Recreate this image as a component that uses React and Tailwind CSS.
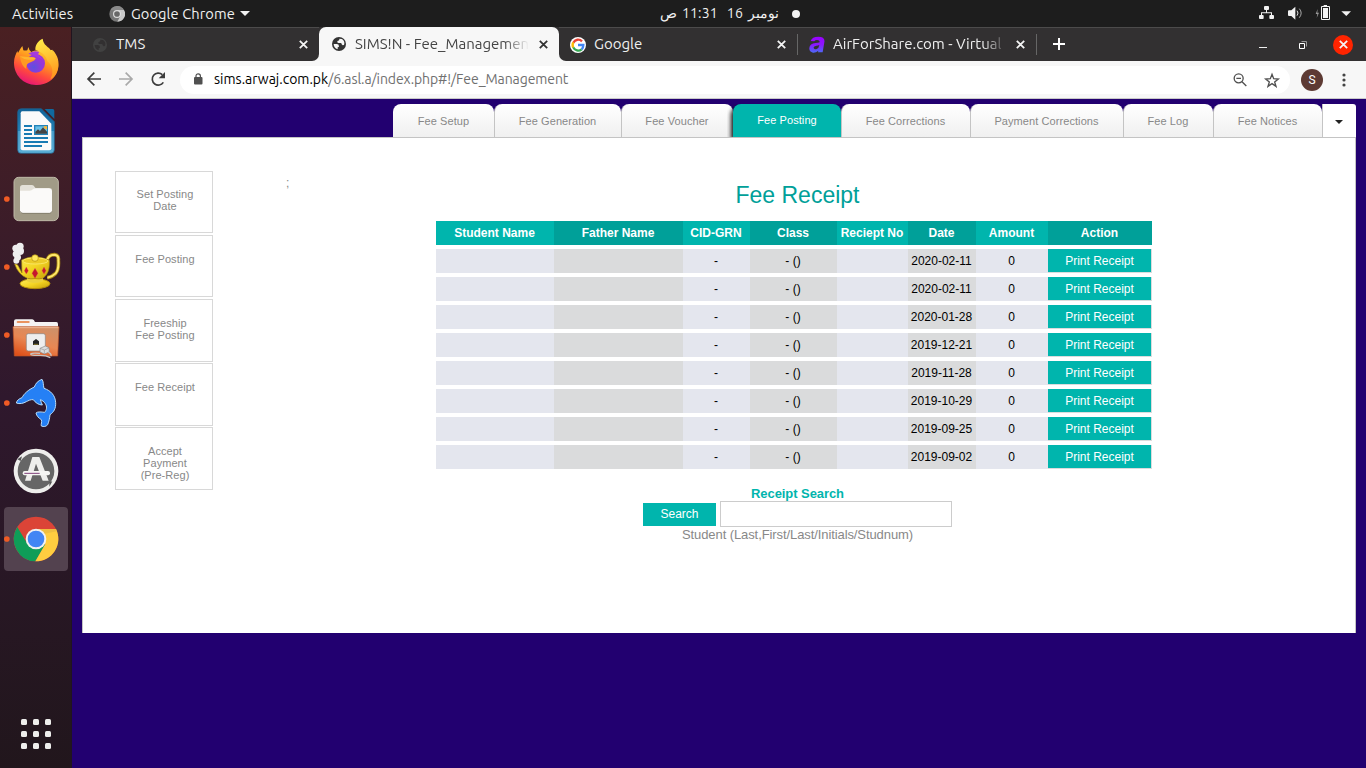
import React from "react";

const UI = "font-['Ubuntu','Noto_Sans',sans-serif]";

function Caret({ className = "" }) {
  return (
    <svg className={className} width="10" height="5" viewBox="0 0 10 5">
      <path d="M0 0h10L5 5z" fill="#f2f2f2" />
    </svg>
  );
}

function TopBar() {
  return (
    <div className={`flex h-[27px] shrink-0 items-center bg-[#1d1d1d] text-[14.67px] text-[#f0f0f0] ${UI}`}>
      <div className="w-[109px] pl-3 whitespace-nowrap tracking-[0.1px]">Activities</div>
      <svg width="16" height="16" viewBox="0 0 48 48" className="shrink-0">
        <circle cx="24" cy="24" r="23" fill="#777" />
        <path d="M24 12h21a23 23 0 0 1-20 35l9-17z" fill="#c9c9c9" />
        <path d="M4 13a23 23 0 0 1 41-1H24z" fill="#8a8a8a" />
        <circle cx="24" cy="24" r="12" fill="#ddd" />
        <circle cx="24" cy="24" r="8.500" fill="#686868" />
      </svg>
      <div className="ml-[6px] w-[104px] whitespace-nowrap tracking-[0.08px]">Google Chrome</div>
      <Caret className="ml-[5px] shrink-0" />
      <div className="ml-[410px] flex w-[119px] items-center justify-between text-[14px] whitespace-nowrap" dir="rtl">
        <span>نومبر</span>
        <span className="tracking-[0.3px]">16</span>
        <span className="mr-1 tracking-[0.2px]">11:31</span>
        <span>ص</span>
      </div>
      <span className="ml-[13px] h-2 w-2 rounded-full bg-[#f2f2f2]" />
      <svg width="108" height="27" viewBox="1128 0 324 81" className="mr-[2px] ml-auto shrink-0">
        <g fill="#f2f2f2">
          <rect x="1152" y="18" width="15" height="12" rx="3" />
          <rect x="1137" y="45" width="14" height="12" rx="3" />
          <rect x="1168" y="45" width="14" height="12" rx="3" />
          <path d="M1158 29h3v8h15v9h-3v-6h-27v6h-3v-9h15z" />
          <path d="M1224 34q0-3 3-3h7l12-11v39l-12-11h-7q-3 0-3-3z" />
          <path d="M1331 15h10v3h6q3 0 3 3v36q0 3-3 3h-21q-3 0-3-3V21q0-3 3-3h5z M1326 21v36h21V21z" fillRule="evenodd" />
          <rect x="1329" y="24" width="15" height="30" />
          <path d="M1384 34h29l-14 14z" />
        </g>
        <path d="M1251 32q6 7 0 15" fill="none" stroke="#e0e0e0" strokeWidth="3" />
        <path d="M1258 26q11 13 0 27" fill="none" stroke="#aaa" strokeWidth="3" />
        <path d="M1313 27l-6 15h5l-2 12 7-16h-5z" fill="#999" />
      </svg>
    </div>
  );
}

function DockItem({ y, running, active, children }) {
  return (
    <svg
      width="64"
      height="64"
      viewBox={`12 ${y} 192 192`}
      className={active ? "rounded-[4px] bg-[#53424f]" : ""}
    >
      {children}
      {running && <circle cx="20.500" cy={y + 96} r="8.500" fill="#ef5b25" />}
    </svg>
  );
}

function Dock() {
  return (
    <div className="flex w-[72px] shrink-0 flex-col items-center gap-1 border-r border-[#21141f] bg-linear-to-b from-[#4a2022] via-[#2f182d] via-50% to-[#21161c] pt-1">
      <DockItem y={9}>
        <defs>
          <linearGradient id="fx" x1="0.8" y1="0" x2="0.3" y2="1">
            <stop offset="0" stopColor="#ffe43d" />
            <stop offset="0.4" stopColor="#ff9a1f" />
            <stop offset="0.7" stopColor="#ff4a3d" />
            <stop offset="1" stopColor="#e5127a" />
          </linearGradient>
          <linearGradient id="fy" x1="0" y1="0" x2="0.2" y2="1">
            <stop offset="0" stopColor="#fff04a" />
            <stop offset="1" stopColor="#ff9a20" />
          </linearGradient>
          <radialGradient id="fp" cx="0.4" cy="0.7">
            <stop offset="0" stopColor="#5d50e0" />
            <stop offset="1" stopColor="#9a35d8" />
          </radialGradient>
        </defs>
        <path d="M67 54l3 13q5 1 12 0l3-10q2 10 9 15c15-8 27-4 34 1l29-8 2 6q9 11 12 19 8 25 0 43c-10 24-34 39-63 38-40-2-66-31-66-67 0-16 6-26 10-35l2 6q5-11 13-21z" fill="url(#fx)" />
        <path d="M106 65c0-16 9-27 22-33 2 16 10 20 19 28l10 13 1-7c17 18 21 39 15 59-4 15-13 25-22 29 13-25 4-44-9-55-4-18-17-27-36-34z" fill="url(#fy)" />
        <circle cx="107" cy="106" r="28" fill="url(#fp)" />
        <path d="M85 77q16-12 33-5-6 7-1 11l18 16-16-9z" fill="#a33bdd" />
        <path d="M59 85l31 3q12-1 17 3-1 7-12 10l-10 5q-8 6-6 17c-14-9-17-26-20-38z" fill="#ff9a22" />
        <path d="M59 85l31 3q12-1 17 3-9 6-20 4-15 1-28-10z" fill="#ffb52e" />
      </DockItem>
      <DockItem y={213}>
        <defs>
          <linearGradient id="wr" x1="0" y1="0" x2="0" y2="1">
            <stop offset="0" stopColor="#116297" />
            <stop offset="0.5" stopColor="#2382b8" />
            <stop offset="0.51" stopColor="#4aa0cd" />
            <stop offset="1" stopColor="#5aaed6" />
          </linearGradient>
        </defs>
        <path d="M64 242h60l39 39v84q0 11-11 11H64q-11 0-11-11V253q0-11 11-11z" fill="url(#wr)" stroke="#1d6493" strokeWidth="2" />
        <path d="M67 250h51l36 37v74q0 6-6 6H68q-6 0-6-6V256q0-6 5-6z" fill="#fafafa" />
        <path d="M134 243h24q5 0 5 5v25z" fill="#116a9f" />
        <path d="M72 294h24M72 306h24M72 318h24M72 330h72M72 342h72M72 354h54" stroke="#187bb3" strokeWidth="6" />
        <rect x="102" y="291" width="42" height="30" fill="#2383b8" />
        <rect x="106" y="295" width="35" height="22" fill="#68c1e8" />
        <path d="M106 317v-6l8-7 6 5 9-11 12 13v6z" fill="#444" />
        <path d="M131 295h10v9q-9 0-10-9z" fill="#ffb52e" />
      </DockItem>
      <DockItem y={417} running>
        <rect x="42" y="448" width="133" height="130" rx="14" fill="#a19b87" stroke="#bfb9a8" strokeWidth="3" />
        <path d="M60 545v-66q0-8 8-8h28q5 0 8 6l3 4h41v64z" fill="#e4e1d8" />
        <path d="M60 488h29q6 0 10-4 4-3 9-3h41q7 0 7 7v60q0 7-7 7H67q-7 0-7-7z" fill="#fbfaf9" />
        <path d="M61 550q2 6 8 6h79q6 0 8-6" fill="none" stroke="#76705f" strokeWidth="2" />
      </DockItem>
      <DockItem y={21} running>
        <defs>
          <linearGradient id="lamp" x1="0" y1="0" x2="1" y2="1">
            <stop offset="0" stopColor="#fff05d" />
            <stop offset="0.5" stopColor="#f3d423" />
            <stop offset="1" stopColor="#c49d06" />
          </linearGradient>
        </defs>
        <path d="M142 94q5-14 22-14 13 2 11 17 2 27-8 39-11 11-25 13" fill="none" stroke="#a88713" strokeWidth="11" />
        <path d="M142 94q5-14 22-14 13 2 11 17 2 27-8 39-11 11-25 13" fill="none" stroke="#ffe96c" strokeWidth="6" />
        <path d="M44 108q9-2 14 12l8 15-1-39q40-20 83 1 3 37-18 53-23 10-48 1-27-11-38-43z" fill="url(#lamp)" stroke="#a88713" strokeWidth="2" />
        <g fill="#eee">
          <circle cx="60" cy="55" r="11" /><circle cx="48" cy="61" r="11" /><circle cx="60" cy="69" r="12" />
          <circle cx="48" cy="78" r="10" /><circle cx="53" cy="88" r="10" /><circle cx="49" cy="98" r="9" />
        </g>
        <ellipse cx="105" cy="167" rx="45" ry="15" fill="url(#lamp)" stroke="#b28c0b" strokeWidth="3" />
        <path d="M81 151q23 12 48 0v9q-24 10-48 0z" fill="#ead03f" />
        <ellipse cx="106" cy="99" rx="38" ry="9" fill="#eccb28" stroke="#fff281" strokeWidth="2" />
        <circle cx="105" cy="90" r="10" fill="#ffe95d" stroke="#b28c0b" strokeWidth="2" />
        <g fill="#c5162d" stroke="#e0604a" strokeWidth="1">
          <path d="M79 117l6 11-6 10-6-10zM105 121l9 15-9 15-9-15zM132 117l6 11-6 10-6-10z" />
        </g>
      </DockItem>
      <DockItem y={225} running>
        <defs>
          <linearGradient id="folder" x1="0.7" y1="0" x2="0.2" y2="1">
            <stop offset="0" stopColor="#cf9068" />
            <stop offset="0.5" stopColor="#e88753" />
            <stop offset="1" stopColor="#df5019" />
          </linearGradient>
        </defs>
        <path d="M42 298v-18q0-6 6-6h49q5 0 8 8h64q5 0 5 6v10z" fill="#f4f3f3" />
        <path d="M53 282h33" stroke="#e9935f" strokeWidth="6" strokeLinecap="round" />
        <path d="M39 296h138l-4 88H43z" fill="url(#folder)" stroke="#bb542a" strokeWidth="2" />
        <path d="M41 299h134" stroke="#efb692" strokeWidth="3" />
        <rect x="79" y="317" width="57" height="52" rx="6" fill="#eee" stroke="#888" strokeWidth="2" />
        <path d="M99 351v-11l9-7 9 7v11z" fill="#222" />
        <path d="M101 349h14" stroke="#887b36" strokeWidth="3" />
        <path d="M120 361l16-7 11 5 1 13-15 6-13-6z" fill="#dcdcdc" stroke="#888" strokeWidth="2" />
        <path d="M120 361l13 5v12M133 366l14-6" fill="none" stroke="#999" strokeWidth="2" />
        <path d="M145 372q12 8 7 12M120 376q-25-2-28 2 0 5 25 4 20-1 34 7" fill="none" stroke="#c4c4c4" strokeWidth="4" />
      </DockItem>
      <DockItem y={429} running>
        <path d="M49 525C50 518 57 512 66 509C72 497 84 486 103 477C107 466 114 458 126 454C131 461 129 470 132 481C153 488 166 503 167 524C168 541 161 553 150 560C149 571 147 580 143 590C138 596 131 597 124 594C122 589 127 581 124 575C117 571 109 563 108 555C113 550 124 552 134 553C140 546 142 536 136 527C132 521 127 517 121 515C122 521 126 526 127 531C116 531 106 524 100 515C92 514 85 518 79 521C70 526 59 529 49 525Z" fill="#2580f5" stroke="#b9dcf8" strokeWidth="3" strokeLinejoin="round" />
      </DockItem>
      <DockItem y={9}>
        <circle cx="108" cy="105" r="67" fill="#eeeeec" />
        <circle cx="108" cy="105" r="55" fill="#666" />
        <path d="M97 63h21l28 71h-18l-20-51-16 51H75z" fill="#eeeeec" />
        <rect x="68" y="105" width="82" height="13" rx="6" fill="#f5f5f3" />
        <path d="M73 112h46" stroke="#7e3e78" strokeWidth="3" />
        <path d="M52 70l14-9-4 14M148 138l9-2-9 16z" fill="#555" />
      </DockItem>
      <DockItem y={213} running active>
        <circle cx="108" cy="309" r="67" fill="#db4437" />
        <path d="M52 273a67 67 0 0 0 54 103l30-50-28-17-26 14z" fill="#0f9d58" />
        <path d="M108 279h60a67 67 0 0 1-62 97l30-52z" fill="#ffcd40" />
        <path d="M108 279h60l3 7-42 8z" fill="#e5b542" opacity=".6" />
        <circle cx="108" cy="309" r="31" fill="#f1f1f1" />
        <circle cx="108" cy="309" r="25" fill="#4285f4" />
      </DockItem>
      <div className="mt-auto mb-[19px] grid grid-cols-3 gap-[6px]">
        {Array.from({ length: 9 }, (_, i) => (
          <span key={i} className="h-[6px] w-[6px] rounded-[1.500px] bg-[#eeeeec]" />
        ))}
      </div>
    </div>
  );
}

function Globe({ color, land }) {
  return (
    <svg width="14" height="14" viewBox="0 0 42 42" className="shrink-0">
      <circle cx="21" cy="21" r="21" fill={color} />
      <path d="M5 21h9q7 0 7 7 0 3-4 3v6Q5 33 5 21zM22 5q1 5-3 6-4 0-3 4 0 3 4 3h6q3 0 3 4l3 3q5 0 5-4 1-11-8-15z" fill={land} />
    </svg>
  );
}

function Close({ color = "#f4f4f4" }) {
  return (
    <svg width="9" height="9" viewBox="0 0 9 9" className="shrink-0">
      <path d="M.8.8l7.400 7.400M8.200.8L.8 8.200" stroke={color} strokeWidth="1.800" />
    </svg>
  );
}

const fade = "[mask-image:linear-gradient(to_right,#000_86%,transparent)]";

function BrowserTabs() {
  return (
    <div className={`flex h-[34px] shrink-0 items-stretch bg-[#f7f7f7] text-[15px] text-[#efefef] ${UI}`}>
      <div className="flex w-[247px] items-center rounded-br-[7px] border-t border-[#4c4b4b] bg-[#323031] pr-[11px] pl-[21px]">
        <Globe color="#414141" land="#323031" />
        <span className="ml-[9px] flex-1">TMS</span>
        <Close />
      </div>
      <div className="flex w-[240px] bg-[linear-gradient(#323031_50%,#f7f7f7_50%)]">
        <div className="flex w-full items-center rounded-t-[7px] bg-[#f7f7f7] pr-[11px] pl-[13px] text-[#444]">
          <Globe color="#333" land="#f7f7f7" />
          <span className={`ml-[9px] w-[174px] overflow-hidden whitespace-nowrap ${fade}`}>SIMS!N - Fee_Management</span>
          <span className="ml-auto flex"><Close color="#333" /></span>
        </div>
      </div>
      <div className="flex flex-1 rounded-bl-[7px] border-t border-[#4c4b4b] bg-[#323031]">
        <div className="flex w-[238px] items-center pr-[11px] pl-[11px]">
          <svg width="16" height="16" viewBox="0 0 48 48" className="shrink-0">
            <circle cx="24" cy="24" r="24" fill="#fff" />
            <g fill="none" strokeWidth="7">
              <path d="M36 13a16 16 0 0 0-26 4" stroke="#ea4335" />
              <path d="M10 16a16 16 0 0 0 0 16" stroke="#fbbc05" />
              <path d="M10 31a16 16 0 0 0 25 6" stroke="#34a853" />
              <path d="M24 24h16q0 8-5 13" stroke="#4285f4" />
            </g>
          </svg>
          <span className="ml-2 flex-1">Google</span>
          <Close />
        </div>
        <div className="my-[6px] w-px bg-[#666]" />
        <div className="flex w-[238px] items-center pr-[11px] pl-[11px]">
          <svg width="16" height="17" viewBox="0 0 48 51" className="shrink-0">
            <defs>
              <linearGradient id="air" x1="0" y1="0" x2="0" y2="1">
                <stop offset="0" stopColor="#9b00ff" />
                <stop offset="0.5" stopColor="#8b17ff" />
                <stop offset="1" stopColor="#4b6cf5" />
              </linearGradient>
            </defs>
            <path d="M5 15Q9 2 28 2q21 0 18 17l-5 30H27l1-5q-8 7-16 6Q0 48 1 36q1-14 19-15 8 0 12-2 0-7-8-7-6 0-8 4zM31 27q-4 2-9 2-9 1-8 7 2 5 9 3 7-3 8-12z" fill="url(#air)" />
          </svg>
          <span className={`ml-2 w-[174px] overflow-hidden whitespace-nowrap ${fade}`}>AirForShare.com - Virtual</span>
          <span className="ml-auto flex"><Close /></span>
        </div>
        <div className="my-[6px] w-px bg-[#666]" />
        <svg width="12" height="12" viewBox="0 0 12 12" className="mt-[10px] ml-4">
          <path d="M6 0v12M0 6h12" stroke="#fff" strokeWidth="2" />
        </svg>
        <div className="mr-[13px] ml-auto flex items-center">
          <span className="mt-[5px] h-px w-2 bg-[#eee]" />
          <svg width="8" height="8" viewBox="0 0 8 8" className="mr-[26px] ml-8">
            <path d="M.5 2.500h5v5h-5z" fill="none" stroke="#fff" />
            <path d="M2.500.5h5v5" fill="none" stroke="#999" />
          </svg>
          <span className="flex h-5 w-5 items-center justify-center rounded-full bg-[#ff2400]"><Close /></span>
        </div>
      </div>
    </div>
  );
}

function Toolbar() {
  return (
    <div className={`flex h-[38px] shrink-0 items-center border-b border-[#c9c9c9] bg-[#f7f7f7] ${UI}`}>
      <svg width="108" height="37" viewBox="216 183 324 111" className="shrink-0">
        <g fill="none" strokeWidth="5">
          <path d="M303 237h-38M283 218l-19 19 19 19" stroke="#3c3c3c" />
          <path d="M357 237h38M377 218l19 19-19 19" stroke="#a9a9a9" />
          <path d="M490 247a18 18 0 1 1-3-23" stroke="#3c3c3c" />
        </g>
        <path d="M495 216v19h-19z" fill="#3c3c3c" />
      </svg>
      <div className="flex h-7 w-[1110px] shrink-0 items-center rounded-full bg-white pl-[13px]">
        <svg width="10" height="12" viewBox="0 0 10 12" className="-mt-[2px] shrink-0">
          <rect x="1" y="4" width="8.500" height="7.500" rx="1" fill="#505050" />
          <path d="M3 4.500V3a2.200 2.200 0 0 1 4.400 0v1.500" fill="none" stroke="#505050" strokeWidth="1.200" />
        </svg>
        <div className="ml-[11px] flex-1 text-[14px] whitespace-nowrap text-[#707070]">
          <span className="inline-block text-black">sims.arwaj.com.pk</span>
          <span className="inline-block tracking-[-0.08px]">/6.asl.a/index.php#!/Fee_Management</span>
        </div>
        <svg width="70" height="28" viewBox="1020 195 210 84" className="shrink-0">
          <g fill="none" stroke="#505050" strokeWidth="4">
            <circle cx="1076" cy="232" r="13.500" />
            <path d="M1086 242l13 13M1069 232h14" />
            <path d="M1176 220l5 13 14 1-11 9 4 13-12-8-12 8 4-13-11-9 14-1z" strokeLinejoin="miter" />
          </g>
        </svg>
      </div>
      <span className="ml-[11px] flex h-[22px] w-[22px] items-center justify-center rounded-full bg-[#5d3a33] font-['Roboto',sans-serif] text-[12px] text-white">S</span>
      <svg width="4" height="14" viewBox="0 0 4 14" className="ml-[19px]">
        <g fill="#444"><circle cx="2" cy="2" r="1.600" /><circle cx="2" cy="7" r="1.600" /><circle cx="2" cy="12" r="1.600" /></g>
      </svg>
    </div>
  );
}

const navTabs = [
  ["Fee Setup", "w-[101px]"],
  ["Fee Generation", "w-[127px]"],
  ["Fee Voucher", "w-[112px]"],
  ["Fee Posting", "w-[108px]"],
  ["Fee Corrections", "w-[129px]"],
  ["Payment Corrections", "w-[153px]"],
  ["Fee Log", "w-[90px]"],
  ["Fee Notices", "w-[109px]"],
];

function NavTabs() {
  return (
    <div className="flex h-[33px] justify-end text-[11px] tracking-[0.08px] text-[#888]">
      {navTabs.map(([label, w], i) =>
        label === "Fee Posting" ? (
          <div key={label} className={`${w} relative flex items-center justify-center rounded-t-[8px] bg-[#00b5ad] text-white shadow-[-2px_3px_4px_#111] [clip-path:inset(0_0_0_-6px)]`}>
            {label}
          </div>
        ) : (
          <div key={label} className={`${w} flex items-center justify-center rounded-t-[8px] ${i ? "border-l border-[#c4c4c4] pr-px" : ""} bg-linear-to-b from-white to-[#f0f0f0] pt-[2px]`}>
            {label}
          </div>
        )
      )}
      <div className="flex w-[34px] items-center justify-center rounded-tr-[3px] border-l border-[#c4c4c4] bg-white pt-[2px] pr-px">
        <svg width="8" height="4" viewBox="0 0 8 4"><path d="M0 0h8L4 4z" fill="#222" /></svg>
      </div>
    </div>
  );
}

const sideItems = [
  { lines: ["Set Posting", "Date"], box: "h-[62px] pt-[16px] mb-[2px]" },
  { lines: ["Fee Posting"], box: "h-[62px] pt-[17px] mb-[2px]" },
  { lines: ["Freeship", "Fee Posting"], box: "h-[63px] pt-[17px] mb-px" },
  { lines: ["Fee Receipt"], box: "h-[63px] pt-[17px] mb-px" },
  { lines: ["Accept", "Payment", "(Pre-Reg)"], box: "h-[63px] pt-[17px]" },
];

const columns = ["Student Name", "Father Name", "CID-GRN", "Class", "Reciept No", "Date", "Amount", "Action"];
const dates = ["2020-02-11", "2020-02-11", "2020-01-28", "2019-12-21", "2019-11-28", "2019-10-29", "2019-09-25", "2019-09-02"];
const gridCols = "grid grid-cols-[118px_129px_67px_87px_71px_68px_72px_104px]";

function ReceiptTable() {
  return (
    <div className="flex w-[716px] flex-col gap-1 text-[12px]">
      <div className={`${gridCols} h-6 font-bold text-white`}>
        {columns.map((c, i) => (
          <div key={c} className={`flex items-center justify-center pr-px whitespace-nowrap ${i % 2 ? "bg-[#00a099]" : "bg-[#00b5ad]"}`}>{c}</div>
        ))}
      </div>
      {dates.map((date, r) => (
        <div key={r} className={`${gridCols} h-6 text-black`}>
          {["", "", "-", "- ()", "", date, "0"].map((v, i) => (
            <div key={i} className={`flex items-center justify-center pr-px whitespace-nowrap ${i % 2 ? "bg-[#dadbdc]" : "bg-[#e4e6ee]"}`}>{v}</div>
          ))}
          <div className="bg-[#dadbdc] pr-px pb-px">
            <button className="block h-[23px] w-full bg-[#00b5ad] text-center text-white">Print Receipt</button>
          </div>
        </div>
      ))}
    </div>
  );
}

function Page() {
  return (
    <div className="flex-1 bg-[#220070] pt-[5px] pr-[10px] pl-[10px] font-['Liberation_Sans',Arial,sans-serif]">
      <NavTabs />
      <div className="flex h-[496px] border-x border-t border-[#c4c4c4] bg-white">
        <div className="mt-[33px] ml-8 w-[98px] shrink-0">
          {sideItems.map((s) => (
            <div key={s.lines.join()} className={`${s.box} border border-[#d8d8d8] pl-[2px] text-center text-[11px] leading-[12px] tracking-[0.05px] text-[#888]`}>
              {s.lines.map((l) => <div key={l}>{l}</div>)}
            </div>
          ))}
        </div>
        <div className="mt-[38px] ml-[73px] w-[150px] shrink-0 text-[12px] leading-[14px] text-[#888]">;</div>
        <div className="flex w-[716px] shrink-0 flex-col">
          <h1 className="mt-[42px] mb-[11px] pl-[7px] text-center text-[23px] leading-[30px] text-[#00a099]">Fee Receipt</h1>
          <ReceiptTable />
          <div className="mt-[17px] pl-[7px] text-center text-[13px] leading-[15px] font-bold tracking-[-0.07px] text-[#00b5ad]">Receipt Search</div>
          <div className="flex h-[26px] items-center justify-center gap-1 pl-[7px]">
            <button className="h-[23px] w-[73px] bg-[#00b5ad] text-[12px] text-white">Search</button>
            <input className="h-[26px] w-[232px] border border-[#ccc] bg-white" />
          </div>
          <div className="pl-[7px] text-center text-[13px] leading-[15px] tracking-[-0.09px] text-[#888]">Student (Last,First/Last/Initials/Studnum)</div>
        </div>
      </div>
    </div>
  );
}

export default function App() {
  return (
    <div className="flex h-[768px] w-[1366px] flex-col overflow-hidden">
      <TopBar />
      <div className="flex min-h-0 flex-1">
        <Dock />
        <div className="flex min-w-0 flex-1 flex-col">
          <BrowserTabs />
          <Toolbar />
          <Page />
        </div>
      </div>
    </div>
  );
}
